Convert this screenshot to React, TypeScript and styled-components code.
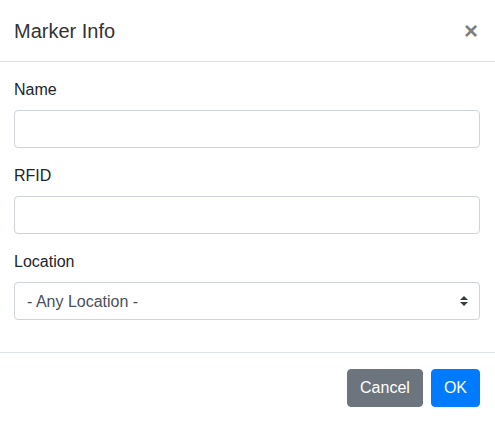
import React from "react";
import styled, { createGlobalStyle } from "styled-components";

const GlobalStyle = createGlobalStyle`
  html, body {
    margin: 0;
    padding: 0;
    background: #fff;
  }
  body {
    font-family: "Liberation Sans", Arial, sans-serif;
    font-size: 16px;
    line-height: 1.5;
    color: #212529;
  }
  * { box-sizing: border-box; }
`;

const Modal = styled.div`
  width: 495px;
  display: flex;
  flex-direction: column;
  background: #fff;
`;

const Header = styled.div`
  display: flex;
  align-items: flex-start;
  justify-content: space-between;
  padding: 16px 15px 15px 14px;
  border-bottom: 1px solid #dee2e6;
`;

const Title = styled.h5`
  margin: 0;
  font-size: 20px;
  font-weight: 500;
  line-height: 1.5;
  color: #333;
`;

const Close = styled.button`
  padding: 0;
  margin: 0 2px 0 0;
  border: 0;
  background: transparent;
  font-family: "Liberation Sans", Arial, sans-serif;
  font-size: 24px;
  font-weight: 700;
  line-height: 30px;
  color: #000;
  opacity: 0.5;
  cursor: pointer;
`;

const Body = styled.div`
  padding: 16px 15px 16px 14px;
  border-bottom: 1px solid #dee2e6;
`;

const Group = styled.div`
  margin-bottom: 16px;
  display: flex;
  flex-direction: column;
`;

const Label = styled.label`
  display: block;
  margin-bottom: 8px;
  line-height: 24px;
  color: #212529;
`;

const Input = styled.input`
  display: block;
  width: 100%;
  height: 38px;
  padding: 6px 12px;
  font-family: inherit;
  font-size: 16px;
  color: #495057;
  background: #fff;
  border: 1px solid #ced4da;
  border-radius: 4px;
  outline: none;
`;

const SelectWrap = styled.div`
  position: relative;
`;

const Select = styled.select`
  display: block;
  width: 100%;
  height: 38px;
  padding: 6px 28px 6px 12px;
  font-family: inherit;
  font-size: 16px;
  color: #495057;
  background: #fff;
  border: 1px solid #ced4da;
  border-radius: 4px;
  appearance: none;
  -webkit-appearance: none;
  outline: none;
`;

const Arrows = styled.svg`
  position: absolute;
  right: 12px;
  top: 14px;
  width: 8px;
  height: 10px;
  pointer-events: none;
`;

const Footer = styled.div`
  display: flex;
  justify-content: flex-end;
  align-items: center;
  gap: 8px;
  padding: 16px 15px 15px 14px;
`;

const Button = styled.button<{ $variant: "secondary" | "primary" }>`
  height: 38px;
  padding: 6px 12px;
  font-family: inherit;
  font-size: 16px;
  line-height: 24px;
  color: #fff;
  border: 1px solid ${(p) => (p.$variant === "primary" ? "#007bff" : "#6c757d")};
  background: ${(p) => (p.$variant === "primary" ? "#007bff" : "#6c757d")};
  border-radius: 4px;
  cursor: pointer;
`;

export default function App() {
  return (
    <>
      <GlobalStyle />
      <Modal>
        <Header>
          <Title>Marker Info</Title>
          <Close aria-label="Close">×</Close>
        </Header>
        <Body>
          <Group>
            <Label htmlFor="name">Name</Label>
            <Input id="name" type="text" />
          </Group>
          <Group>
            <Label htmlFor="rfid">RFID</Label>
            <Input id="rfid" type="text" />
          </Group>
          <Group>
            <Label htmlFor="location">Location</Label>
            <SelectWrap>
              <Select id="location" defaultValue="">
                <option value="">- Any Location -</option>
              </Select>
              <Arrows viewBox="0 0 4 5">
                <path fill="#343a40" d="M2 0L0 2h4zm0 5L0 3h4z" />
              </Arrows>
            </SelectWrap>
          </Group>
        </Body>
        <Footer>
          <Button $variant="secondary">Cancel</Button>
          <Button $variant="primary">OK</Button>
        </Footer>
      </Modal>
    </>
  );
}
